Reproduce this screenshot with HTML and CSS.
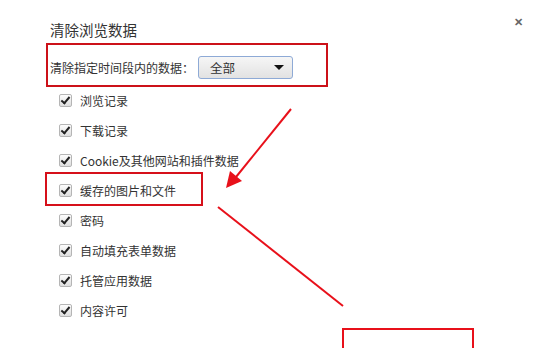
FILE: index.html
```html
<!DOCTYPE html>
<html lang="zh-CN">
<head>
    <meta charset="UTF-8">
    <title>清除浏览数据</title>
    <link rel="stylesheet" href="styles.css">
</head>
<body>
    <div class="dialog">
        <span class="close">&#x2715;</span>
        <h1>清除浏览数据</h1>

        <div class="range">
            <span class="range-label">清除指定时间段内的数据：</span>
            <div class="select">
                <span>全部</span>
                <span class="caret"></span>
            </div>
        </div>

        <ul class="options">
            <li><span class="check"></span>浏览记录</li>
            <li><span class="check"></span>下载记录</li>
            <li><span class="check"></span>Cookie及其他网站和插件数据</li>
            <li><span class="check"></span>缓存的图片和文件</li>
            <li><span class="check"></span>密码</li>
            <li><span class="check"></span>自动填充表单数据</li>
            <li><span class="check"></span>托管应用数据</li>
            <li><span class="check"></span>内容许可</li>
        </ul>
    </div>

    <!-- annotation layer drawn over the screenshot -->
    <svg class="marks" width="545" height="348" viewBox="0 0 545 348">
        <rect x="47" y="44" width="280" height="42" fill="none" stroke="#cc1119" stroke-width="2"/>
        <rect x="46" y="173" width="156" height="32" fill="none" stroke="#d6101a" stroke-width="2"/>
        <rect x="343" y="329" width="130" height="40" fill="none" stroke="#e8101a" stroke-width="2"/>
        <line x1="291" y1="109" x2="236" y2="177" stroke="#e8101a" stroke-width="2"/>
        <polygon points="226,188 230,171 242,181" fill="#e8101a"/>
        <line x1="218" y1="207" x2="343" y2="306" stroke="#e8101a" stroke-width="2"/>
    </svg>
</body>
</html>
```

FILE: styles.css
```css
body {
    margin: 0;
    background-color: white;
    font-family: "Noto Sans CJK SC", "Noto Sans", sans-serif;
    color: #333;
    width: 545px;
    height: 348px;
    overflow: hidden;
    position: relative;
}
.dialog {
    padding-left: 50px;
}
.close {
    position: absolute;
    top: 14px;
    left: 514px;
    font-size: 11px;
    line-height: 14px;
    color: #666;
    font-weight: bold;
}
h1 {
    font-size: 14.5px;
    font-weight: normal;
    line-height: 20px;
    margin: 20px 0 0;
    color: #333;
}
.range {
    display: flex;
    align-items: center;
    height: 23px;
    margin-top: 16px;
    font-size: 12px;
}
.select {
    margin-left: 4px;
    border: 1px solid #8eaad6;
    border-radius: 3px;
    background: linear-gradient(#f6f6f6, #e2e2e2);
    display: flex;
    align-items: center;
    justify-content: space-between;
    padding: 0 8px 0 11px;
    box-sizing: border-box;
    width: 95px;
    height: 23px;
    font-size: 12.5px;
}
.caret {
    width: 0;
    height: 0;
    border-left: 5px solid transparent;
    border-right: 5px solid transparent;
    border-top: 5px solid #111;
}
.options {
    list-style: none;
    margin: 6px 0 0;
    padding: 0 0 0 9px;
    font-size: 12px;
}
.options li {
    height: 30px;
    display: flex;
    align-items: center;
    gap: 8px;
}
.check {
    width: 13px;
    height: 13px;
    box-sizing: border-box;
    border: 1px solid #b5b5b5;
    border-radius: 2px;
    background: linear-gradient(#fdfdfd, #dedede);
    position: relative;
}
.check::after {
    content: "";
    position: absolute;
    left: 3px;
    top: 0px;
    width: 3px;
    height: 7px;
    border-right: 2px solid #222;
    border-bottom: 2px solid #222;
    transform: rotate(40deg);
}
.marks {
    position: absolute;
    top: 0;
    left: 0;
}
```
